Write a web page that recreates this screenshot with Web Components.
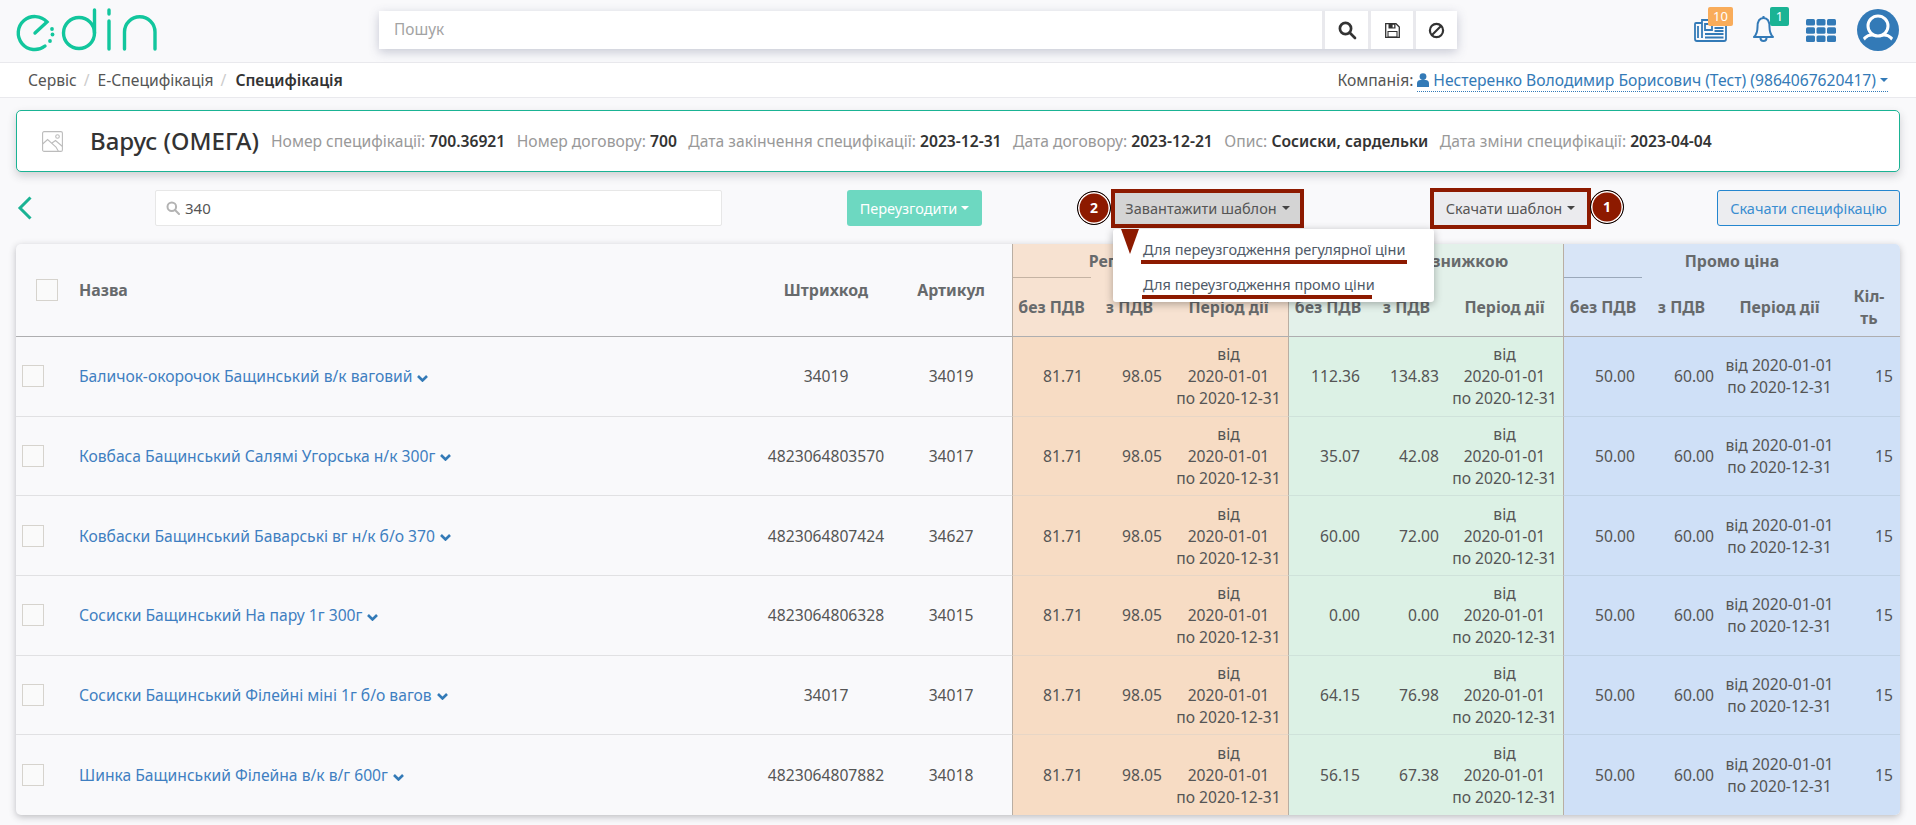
<!DOCTYPE html>
<html lang="uk"><head><meta charset="utf-8"><title>Специфікація</title>
<style>
html,body{margin:0;padding:0;background:#f9f9fb;font:15.65px/20px "Noto Sans","Open Sans",sans-serif;color:#555;overflow:hidden;height:825px}
main-area{display:block}
</style></head><body>
<app-header></app-header>
<crumb-bar></crumb-bar>
<main-area>
  <spec-card></spec-card>
  <spec-toolbar></spec-toolbar>
  <spec-table>
    <spec-row name="Баличок-окорочок Бащинський в/к ваговий" code="34019" art="34019" g1="112.36" g2="134.83"></spec-row>
    <spec-row name="Ковбаса Бащинський Салямі Угорська н/к 300г" code="4823064803570" art="34017" g1="35.07" g2="42.08"></spec-row>
    <spec-row name="Ковбаски Бащинський Баварські вг н/к б/о 370" code="4823064807424" art="34627" g1="60.00" g2="72.00"></spec-row>
    <spec-row name="Сосиски Бащинський На пару 1г 300г" code="4823064806328" art="34015" g1="0.00" g2="0.00"></spec-row>
    <spec-row name="Сосиски Бащинський Філейні міні 1г б/о вагов" code="34017" art="34017" g1="64.15" g2="76.98"></spec-row>
    <spec-row name="Шинка Бащинський Філейна в/к в/г 600г" code="4823064807882" art="34018" g1="56.15" g2="67.38" last></spec-row>
  </spec-table>
</main-area>
<script>
const define=(name,css,html)=>{
  customElements.define(name,class extends HTMLElement{
    constructor(){super();this.attachShadow({mode:'open'});
      if(typeof html!=='function')this.shadowRoot.innerHTML='<style>'+css+'</style>'+html;}
    connectedCallback(){
      if(typeof html==='function')this.shadowRoot.innerHTML='<style>'+css+'</style>'+html(this);
    }
  });
};
const blue='#337ab7';
define('app-header',`
:host{display:flex;align-items:flex-start;height:62px;border-bottom:1px solid #e9e9ed;background:#f9f9fb}
.logo{width:160px;height:62px;margin-left:10px;flex:none;display:block}
.search{margin:11px 0 0 209px;width:1078px;height:38px;display:flex;background:#fff;box-shadow:0 3px 10px rgba(70,75,110,.28);flex:none}
.search .in{flex:1;padding-left:15px;font-size:15.4px;line-height:38px;color:#a3a3a3}
.search .b{width:43px;border-left:3px solid #e9e9ed;display:flex;align-items:center;justify-content:center}
.search .b:nth-child(3){width:42px}.search .b:nth-child(4){width:41px}
.right{position:relative;flex:1;height:62px}
.ic{position:absolute;display:block}
.bd{position:absolute;top:7px;height:19px;border-radius:2px;color:#fff;font-size:13px;line-height:19px;text-align:center}
`,`
<svg class="logo" viewBox="0 0 160 62" fill="none" stroke="#12c69d" stroke-width="3.4" stroke-linecap="round">
  <path d="M25 33 L37 22 A16.5 16.5 0 1 0 35 46"/>
  <circle cx="42" cy="29" r="1.9" fill="#12c69d" stroke="none"/><circle cx="42.5" cy="34.5" r="1.9" fill="#12c69d" stroke="none"/><circle cx="40" cy="41" r="1.9" fill="#12c69d" stroke="none"/>
  <circle cx="69" cy="33" r="15.5"/><path d="M84.5 10V33"/><path d="M99 10v4M99 21v28M114.5 49V32a15.25 15.25 0 0 1 30.5 0V49"/>
</svg>
<div class="search"><div class="in">Пошук</div>
  <div class="b"><svg width="20" height="20" viewBox="0 0 20 20" fill="none" stroke="#333" stroke-width="2.7"><circle cx="8.5" cy="8.5" r="5.6"/><path d="M12.8 12.8L18 18" stroke-linecap="round"/></svg></div>
  <div class="b"><svg width="15" height="15" viewBox="0 0 15 15"><path d="M.7.7H11L14.3 4v10.3H.7z" fill="#fff" stroke="#333" stroke-width="1.3"/><path d="M3.5 1h7v4.5h-7z" fill="#333"/><path d="M7.6 1.8h1.6v2.6H7.6z" fill="#fff"/><path d="M3 8.5h9v5.5H3z" fill="none" stroke="#333" stroke-width="1.1"/></svg></div>
  <div class="b"><svg width="17" height="17" viewBox="0 0 17 17" fill="none" stroke="#333" stroke-width="2.2"><circle cx="8.5" cy="8.5" r="6.6"/><path d="M4 13L13 4"/></svg></div>
</div>
<div class="right">
  <svg class="ic" style="left:237px;top:19px" width="33" height="23" viewBox="0 0 33 23" fill="none" stroke="${blue}" stroke-width="1.8"><path d="M8 4H2a1 1 0 0 0-1 1v15a2 2 0 0 0 2 2h27a2 2 0 0 0 2-2V1H8v18"/><path d="M4 7v12"/><path d="M11 5h7v6h-7zM20.500 6h9M20.500 9h9M20.500 12h9M11 15h18.500M11 18.500h18.500"/></svg>
  <div class="bd" style="left:251px;width:25px;background:#f9ac5a">10</div>
  <svg class="ic" style="left:296px;top:15px" width="21" height="29" viewBox="0 0 21 29" fill="none" stroke="${blue}" stroke-width="2" stroke-linejoin="round"><path d="M10.500 3C6 3 4.500 7 4.500 12c0 5-1.500 8-3.500 10h19c-2-2-3.500-5-3.500-10 0-5-1.500-9-6-9z"/><path d="M7.500 23a3 3 0 0 0 6 0M10.500 1v2"/></svg>
  <div class="bd" style="left:313px;width:19px;background:#1ab394">1</div>
  <svg class="ic" style="left:349px;top:19px" width="30" height="23" viewBox="0 0 30 23" fill="${blue}"><rect width="9" height="6.500" rx="1.500"/><rect x="10.500" width="9" height="6.500" rx="1.500"/><rect x="21" width="9" height="6.500" rx="1.500"/><rect y="8.200" width="9" height="6.500" rx="1.500"/><rect x="10.500" y="8.200" width="9" height="6.500" rx="1.500"/><rect x="21" y="8.200" width="9" height="6.500" rx="1.500"/><rect y="16.500" width="9" height="6.500" rx="1.500"/><rect x="10.500" y="16.500" width="9" height="6.500" rx="1.500"/><rect x="21" y="16.500" width="9" height="6.500" rx="1.500"/></svg>
  <svg class="ic" style="left:400px;top:9px" width="42" height="42" viewBox="0 0 42 42"><defs><clipPath id="c"><circle cx="21" cy="21" r="17"/></clipPath></defs><circle cx="21" cy="21" r="21" fill="${blue}"/><g clip-path="url(#c)" fill="none" stroke="#fff" stroke-width="3"><path d="M5 44V36a10 10 0 0 1 10-10h12a10 10 0 0 1 10 10v8"/></g><circle cx="21" cy="17" r="10" fill="${blue}" stroke="#fff" stroke-width="3"/></svg>
</div>`);

define('crumb-bar',`
:host{display:flex;align-items:center;height:34px;background:#fff;border-bottom:1px solid #e9e9ed;padding:0 28px;color:#555}
.s{color:#ccc;margin:0 8px 0 7px}
b{font-weight:600;color:#333;margin-left:1px}
.c{margin-left:auto;display:flex;align-items:center;color:#555}
.u{margin-left:4px;color:${blue};border-bottom:1px dotted ${blue};display:flex;align-items:center;height:23px;box-sizing:border-box}
.u svg{margin-right:4px}
.car{width:0;height:0;border:4.500px solid transparent;border-top-color:${blue};border-bottom:0;margin-left:4px}
`,`<span>Сервіс</span><span class="s">/</span><span>Е-Специфікація</span><span class="s">/</span><b>Специфікація</b>
<div class="c">Компанія:<div class="u"><svg width="12" height="14" viewBox="0 0 12 14" fill="${blue}"><circle cx="6" cy="3.600" r="3.400"/><path d="M0 14v-3.500a3.500 3.500 0 0 1 3.500-3.500h5a3.500 3.500 0 0 1 3.500 3.500V14z"/></svg>Нестеренко Володимир Борисович (Тест) (9864067620417)<span class="car"></span></div></div>`);

define('spec-card',`
:host{margin:12px 16px 0;height:62px;box-sizing:border-box;border:1px solid #1ab394;border-radius:5px;background:#fff;box-shadow:0 4px 9px rgba(60,60,70,.22);display:flex;align-items:center;padding-left:25px;color:#999}
svg{flex:none;margin-right:27px}
h1{margin:0 12px 0 0;font-size:24px;line-height:30px;font-weight:500;color:#333;white-space:nowrap}
span{margin-right:11.5px;white-space:nowrap}
b{font-weight:600;color:#333}
`,`<svg width="21" height="21" viewBox="0 0 21 21" fill="none" stroke="#bcbcbc" stroke-width="1.100"><rect x=".6" y=".6" width="19.800" height="19.800" rx="1.500"/><circle cx="15.500" cy="5.500" r="1.800"/><path d="M.6 13l5-4.500L14 16l2.500 4.400M10 12l3.500-2.500 7 6"/></svg>
<h1>Варус (ОМЕГА)</h1>
<span>Номер специфікації: <b>700.36921</b></span><span>Номер договору: <b>700</b></span><span>Дата закінчення специфікації: <b>2023-12-31</b></span><span>Дата договору: <b>2023-12-21</b></span><span>Опис: <b>Сосиски, сардельки</b></span><span>Дата зміни специфікації: <b>2023-04-04</b></span>`);

define('spec-toolbar',`
:host{display:grid;position:relative;z-index:5;margin:18px 16px;height:36px;font-size:14.5px;grid-template-rows:36px;grid-template-columns:139px 567px 125px 135px 129px 193px 126px 161px 126px 183px;align-items:center}
.back{grid-column:1;display:block}
.in{grid-column:2;height:36px;box-sizing:border-box;background:#fff;border:1px solid #e7e7e7;border-radius:2px;display:flex;align-items:center;padding-left:10px;color:#555;font-size:15px}
.in svg{margin-right:5px}
.re{grid-column:4;height:36px;background:#6dd8c1;color:#fff;border-radius:3px;display:flex;align-items:center;justify-content:center}
.car{width:0;height:0;border:4px solid transparent;border-top-color:currentColor;border-bottom:0;margin-left:4px}
.dl{grid-column:6}.ds{grid-column:8}
.sp{grid-column:10;height:36px;box-sizing:border-box;border:1px solid #2486cf;border-radius:3px;background:#ecedf0;color:#3a8ed0;display:flex;align-items:center;justify-content:center}
`,`
<svg class="back" width="16" height="24" viewBox="0 0 16 24" fill="none" stroke="#1ab394" stroke-width="3" style="margin-left:1px"><path d="M13.500 1.500L3 12l10.500 10.500"/></svg>
<div class="in"><svg width="14" height="14" viewBox="0 0 14 14" fill="none" stroke="#b3b3b3" stroke-width="2"><circle cx="5.800" cy="5.800" r="4.300"/><path d="M9 9l4 4" stroke-linecap="round"/></svg>340</div>
<div class="re">Переузгодити<span class="car"></span></div>
<tpl-button class="dl" num="2" side="left" h="39" active><span>Завантажити шаблон</span><tpl-menu slot="menu"></tpl-menu></tpl-button>
<tpl-button class="ds" num="1" side="right" h="41"><span>Скачати шаблон</span></tpl-button>
<div class="sp">Скачати специфікацію</div>`);

define('tpl-button',`
:host{display:block;position:relative}
.box{box-sizing:border-box;border:4px solid #8d1a00;display:flex;align-items:center;justify-content:center;color:#555}
.car{width:0;height:0;border:4px solid transparent;border-top-color:#444;border-bottom:0;margin-left:5px}
.n{position:absolute;top:50%;width:34px;height:34px;margin-top:-17px;box-sizing:border-box;border-radius:50%;background:#8d1a00;border:1px solid #000;box-shadow:inset 0 0 0 1.500px #fff;color:#fff;font-weight:700;font-size:14px;line-height:32px;text-align:center}
`,(e)=>{const a=e.hasAttribute('active');const l=e.getAttribute('side')==='left';
return `<div class="box" style="height:${e.getAttribute('h')}px;background:${a?'#d4d4d4':'#ebebee'}"><slot></slot><span class="car"></span></div>
<div class="n" style="${l?'left:-34px':'right:-33px;margin-top:-18px'}">${e.getAttribute('num')}</div><slot name="menu"></slot>`;});

define('tpl-menu',`
:host{display:block;position:absolute;left:2px;top:40px;width:321px;height:73px;background:#fff;border-radius:3px;box-shadow:0 2px 8px rgba(0,0,0,.3);padding:7px 0 0 30px;box-sizing:border-box;color:#4f5a68}
.tri{position:absolute;left:8px;top:0;width:0;height:0;border-left:9px solid transparent;border-right:9px solid transparent;border-top:25px solid #8d1a00}
.it{display:block;width:264px;height:24px;line-height:26px;border-bottom:4px solid #8d1a00;white-space:nowrap;margin:0 0 7px -2px;padding-left:2px}
.it+.it{width:229px;margin-left:-1px;padding-left:1px}
`,`<div class="tri"></div><span class="it">Для переузгодження регулярної ціни</span><span class="it">Для переузгодження промо ціни</span>`);

const COLS='56px 690px 128px 122px 78px 79px 119px 79px 79px 117px 79px 79px 117px 62px';
define('spec-table',`
:host{display:block;margin:18px 16px 0;border-radius:5px;box-shadow:0 2px 7px rgba(50,50,60,.3);background:#f9f9fb;overflow:hidden;--cols:${COLS}}
.h{display:grid;grid-template-columns:var(--cols);grid-template-rows:34px 59px;height:93px;font-weight:700;font-size:15.9px;color:#676a6c}
.h>div{display:flex;align-items:center;justify-content:center;text-align:center;box-sizing:border-box;border-bottom:1px solid #aeaeb0}
.s{grid-row:1/3}
.box{width:22px;height:22px;box-sizing:border-box;border:1px solid #d6d3cd;background:#fafafa}
.n{justify-content:flex-start!important;padding-left:7px}
.g{grid-row:1;border-bottom:0!important;background-repeat:no-repeat;background-position:left bottom;background-size:78px 1px}
.o{background-color:#f7e2d1}.e{background-color:#e3f1ea}.l{background-color:#d8e5f7}
.st{border-left:1px solid #b9aea3}
.g.o{background-image:linear-gradient(#c5b3a3,#c5b3a3)}
.g.l{background-image:linear-gradient(#9aa8ba,#9aa8ba)}
.q{line-height:22px}
`,`<div class="h">
<div class="s" style="justify-content:flex-start"><span class="box" style="margin-left:20px"></span></div>
<div class="s n">Назва</div><div class="s">Штрихкод</div><div class="s">Артикул</div>
<div class="g o st" style="grid-column:5/8">Регулярна ціна</div>
<div class="g e st" style="grid-column:8/11">Регулярна знижкою</div>
<div class="g l st" style="grid-column:11/15">Промо ціна</div>
<div class="o st" style="grid-row:2;grid-column:5">без ПДВ</div><div class="o" style="grid-row:2">з ПДВ</div><div class="o" style="grid-row:2">Період дії</div>
<div class="e st" style="grid-row:2;grid-column:8">без ПДВ</div><div class="e" style="grid-row:2">з ПДВ</div><div class="e" style="grid-row:2">Період дії</div>
<div class="l st" style="grid-row:2;grid-column:11">без ПДВ</div><div class="l" style="grid-row:2">з ПДВ</div><div class="l" style="grid-row:2">Період дії</div><div class="l q" style="grid-row:2">Кіл-<br>ть</div>
</div><slot></slot>`);

define('spec-row',`
:host{display:grid;grid-template-columns:var(--cols);height:79.67px;color:#555}
div{display:flex;align-items:center;box-sizing:border-box;border-bottom:1px solid #e1e1e3;line-height:22px}
.c{justify-content:center;text-align:center}
.r{justify-content:flex-end;padding-right:7px}
.box{display:block;width:22px;height:22px;box-sizing:border-box;border:1px solid #d6d3cd;background:#fafafa;margin-left:6px}
.name{padding-left:7px;color:#3f7fc1;white-space:nowrap}
.name svg{margin-left:5px;margin-top:4px}
.o{background:#f7dcc4;border-bottom-color:#e7d6c6}.e{background:#dcf1e5;border-bottom-color:#cfe2da}.l{background:#cfe0f7;border-bottom-color:#c0d2e6}
.st{border-left:1px solid #b9aea3}
:host([last]) div{border-bottom:0}
`,(e)=>{const g=k=>e.getAttribute(k);const P3='від<br>2020-01-01<br>по 2020-12-31';
return `<div><span class="box"></span></div><div class="name">${g('name')}<svg width="11" height="7" viewBox="0 0 11 7" fill="none" stroke="${blue}" stroke-width="2.600"><path d="M1 1l4.500 4.500L10 1"/></svg></div>
<div class="c">${g('code')}</div><div class="c">${g('art')}</div>
<div class="o st r">81.71</div><div class="o r">98.05</div><div class="o c">${P3}</div>
<div class="e st r">${g('g1')}</div><div class="e r">${g('g2')}</div><div class="e c">${P3}</div>
<div class="l st r">50.00</div><div class="l r">60.00</div><div class="l c">від 2020-01-01<br>по 2020-12-31</div><div class="l r">15</div>`;});
</script>
</body></html>
